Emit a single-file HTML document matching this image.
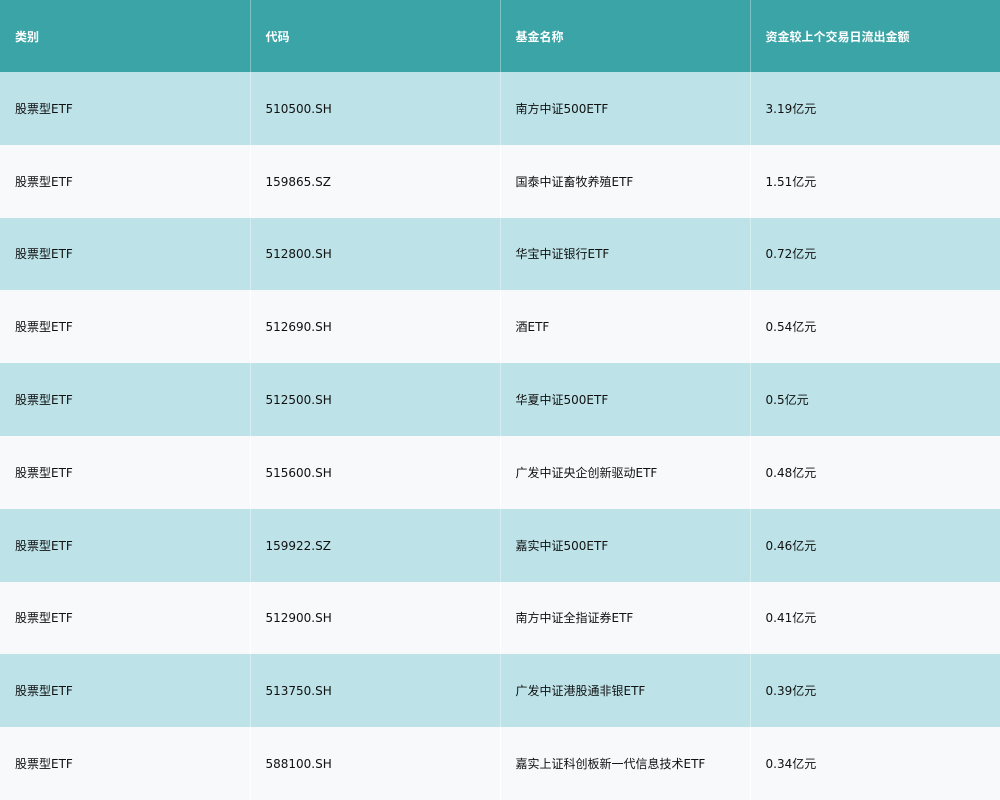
<!DOCTYPE html>
<html><head><meta charset="utf-8"><style>
html,body{margin:0;padding:0;width:1000px;height:800px;overflow:hidden;background:#f8f9fb}
table{border-collapse:collapse;width:1000px;table-layout:fixed;font-family:"DejaVu Sans","Noto Sans CJK SC",sans-serif;font-size:12px;color:#111;line-height:14px}
td,th{padding:0 0 0 15px;text-align:left;border-left:1px solid rgba(255,255,255,0.35);height:72.8px;box-sizing:border-box;white-space:nowrap}
td:first-child,th:first-child{border-left:none;padding-left:15px}
th{background:#3aa4a7;color:#fff;font-weight:bold;height:72px;padding-top:1px}
td{padding-top:1px}
tr.o td{background:#bde3e9}
tr.e td{background:#f8f9fb;border-left-color:#fff}
</style></head><body>
<table>
<tr><th>类别</th><th>代码</th><th>基金名称</th><th>资金较上个交易日流出金额</th></tr>
<tr class="o"><td>股票型ETF</td><td>510500.SH</td><td>南方中证500ETF</td><td>3.19亿元</td></tr>
<tr class="e"><td>股票型ETF</td><td>159865.SZ</td><td>国泰中证畜牧养殖ETF</td><td>1.51亿元</td></tr>
<tr class="o"><td>股票型ETF</td><td>512800.SH</td><td>华宝中证银行ETF</td><td>0.72亿元</td></tr>
<tr class="e"><td>股票型ETF</td><td>512690.SH</td><td>酒ETF</td><td>0.54亿元</td></tr>
<tr class="o"><td>股票型ETF</td><td>512500.SH</td><td>华夏中证500ETF</td><td>0.5亿元</td></tr>
<tr class="e"><td>股票型ETF</td><td>515600.SH</td><td>广发中证央企创新驱动ETF</td><td>0.48亿元</td></tr>
<tr class="o"><td>股票型ETF</td><td>159922.SZ</td><td>嘉实中证500ETF</td><td>0.46亿元</td></tr>
<tr class="e"><td>股票型ETF</td><td>512900.SH</td><td>南方中证全指证券ETF</td><td>0.41亿元</td></tr>
<tr class="o"><td>股票型ETF</td><td>513750.SH</td><td>广发中证港股通非银ETF</td><td>0.39亿元</td></tr>
<tr class="e"><td>股票型ETF</td><td>588100.SH</td><td>嘉实上证科创板新一代信息技术ETF</td><td>0.34亿元</td></tr>
</table>
</body></html>
